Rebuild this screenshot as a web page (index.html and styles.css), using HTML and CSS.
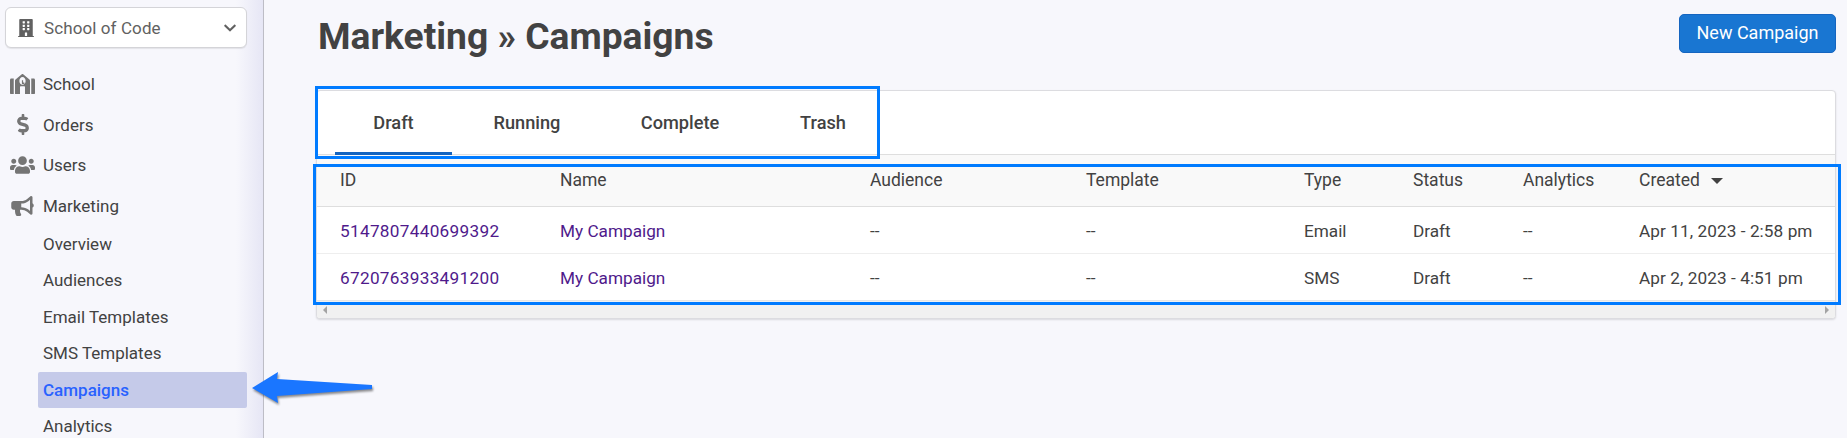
FILE: index.html
```html
<!DOCTYPE html>
<html lang="en">
<head>
<meta charset="utf-8">
<title>Marketing » Campaigns</title>
<link rel="stylesheet" href="styles.css">
</head>
<body>
<div class="app">
  <aside class="sidebar">
    <div class="school-select">
      <svg class="select-icon" viewBox="0 0 448 512"><path d="M436 480h-20V24c0-13.255-10.745-24-24-24H56C42.745 0 32 10.745 32 24v456H12c-6.627 0-12 5.373-12 12v20h448v-20c0-6.627-5.373-12-12-12zM128 76c0-6.627 5.373-12 12-12h40c6.627 0 12 5.373 12 12v40c0 6.627-5.373 12-12 12h-40c-6.627 0-12-5.373-12-12V76zm0 96c0-6.627 5.373-12 12-12h40c6.627 0 12 5.373 12 12v40c0 6.627-5.373 12-12 12h-40c-6.627 0-12-5.373-12-12v-40zm52 148h-40c-6.627 0-12-5.373-12-12v-40c0-6.627 5.373-12 12-12h40c6.627 0 12 5.373 12 12v40c0 6.627-5.373 12-12 12zm76 160h-64v-84c0-6.627 5.373-12 12-12h40c6.627 0 12 5.373 12 12v84zm64-172c0 6.627-5.373 12-12 12h-40c-6.627 0-12-5.373-12-12v-40c0-6.627 5.373-12 12-12h40c6.627 0 12 5.373 12 12v40zm0-96c0 6.627-5.373 12-12 12h-40c-6.627 0-12-5.373-12-12v-40c0-6.627 5.373-12 12-12h40c6.627 0 12 5.373 12 12v40zm0-96c0 6.627-5.373 12-12 12h-40c-6.627 0-12-5.373-12-12V76c0-6.627 5.373-12 12-12h40c6.627 0 12 5.373 12 12v40z"/></svg>
      <span class="select-label">School of Code</span>
      <svg class="select-chevron" viewBox="0 0 448 512"><path d="M207.029 381.476L12.686 187.132c-9.373-9.373-9.373-24.569 0-33.941l22.667-22.667c9.357-9.357 24.522-9.375 33.901-.04L224 284.505l154.745-154.021c9.379-9.335 24.544-9.317 33.901.04l22.667 22.667c9.373 9.373 9.373 24.569 0 33.941L240.971 381.476c-9.373 9.372-24.569 9.372-33.942 0z"/></svg>
    </div>
    <nav class="nav">
      <div class="nav-item">
        <span class="nav-icon"><svg class="icon-school" viewBox="0 96 640 416" preserveAspectRatio="none"><path d="M0 224v272c0 8.84 7.16 16 16 16h80V192H32c-17.67 0-32 14.33-32 32zm360 48h-24v-40c0-4.42-3.58-8-8-8h-16c-4.42 0-8 3.58-8 8v64c0 4.42 3.58 8 8 8h48c4.42 0 8-3.58 8-8v-16c0-4.42-3.58-8-8-8zm137.75-63.96l-160-106.67a32.02 32.02 0 0 0-35.5 0l-160 106.67A32.002 32.002 0 0 0 128 234.66V512h128V368c0-8.84 7.16-16 16-16h96c8.84 0 16 7.16 16 16v144h128V234.67c0-10.7-5.35-20.69-14.25-26.63zM320 320c-44.18 0-80-35.82-80-80s35.82-80 80-80 80 35.82 80 80-35.82 80-80 80zm288-128h-64v320h80c8.84 0 16-7.16 16-16V224c0-17.67-14.33-32-32-32z"/></svg></span>
        School
      </div>
      <div class="nav-item">
        <span class="nav-icon"><svg class="icon-dollar" viewBox="0 0 288 512"><path d="M209.2 233.4l-108-31.6C88.7 198.2 80 186.5 80 173.5c0-16.3 13.2-29.5 29.5-29.5h66.3c12.2 0 24.2 3.7 34.2 10.5 6.1 4.1 14.3 3.1 19.5-2l34.8-34c7.1-6.9 6.1-18.4-1.8-24.5C238 74.8 207.4 64.1 176 64V16c0-8.8-7.2-16-16-16h-32c-8.8 0-16 7.2-16 16v48h-2.5C45.8 64-5.4 118.7.5 183.6c4.2 46.1 39.4 83.6 83.8 96.6l102.5 30c12.5 3.7 21.2 15.3 21.2 28.3 0 16.3-13.2 29.5-29.5 29.5h-66.3C100 368 88 364.3 78 357.5c-6.1-4.1-14.3-3.1-19.5 2l-34.8 34c-7.1 6.9-6.1 18.4 1.8 24.5 24.5 19.2 55.1 29.9 86.5 30v48c0 8.8 7.2 16 16 16h32c8.8 0 16-7.2 16-16v-48.2c46.6-.9 90.3-28.6 105.7-72.7 21.5-61.6-14.6-124.8-72.5-141.7z"/></svg></span>
        Orders
      </div>
      <div class="nav-item">
        <span class="nav-icon"><svg class="icon-users" viewBox="0 0 640 512"><path d="M96 224c35.3 0 64-28.7 64-64s-28.7-64-64-64-64 28.7-64 64 28.7 64 64 64zm448 0c35.3 0 64-28.7 64-64s-28.7-64-64-64-64 28.7-64 64 28.7 64 64 64zm32 32h-64c-17.6 0-33.5 7.1-45.1 18.6 40.3 22.1 68.9 62 75.1 109.4h66c17.7 0 32-14.3 32-32v-32c0-35.3-28.7-64-64-64zm-256 0c61.9 0 112-50.1 112-112S381.9 32 320 32 208 82.1 208 144s50.1 112 112 112zm76.8 32h-8.3c-20.8 10-43.9 16-68.5 16s-47.6-6-68.5-16h-8.3C179.6 288 128 339.6 128 403.2V432c0 26.5 21.5 48 48 48h288c26.5 0 48-21.5 48-48v-28.8c0-63.6-51.6-115.2-115.2-115.2zm-223.7-13.4C161.5 263.1 145.6 256 128 256H64c-35.3 0-64 28.7-64 64v32c0 17.7 14.3 32 32 32h65.9c6.3-47.4 34.9-87.3 75.2-109.4z"/></svg></span>
        Users
      </div>
      <div class="nav-item">
        <span class="nav-icon"><svg class="icon-bullhorn" viewBox="0 0 576 512"><path d="M576 240c0-23.63-12.95-44.04-32-55.12V32.01C544 23.26 537.02 0 512 0c-7.12 0-14.19 2.38-19.98 7.02l-85.03 68.03C364.28 109.19 310.66 128 256 128H64c-35.35 0-64 28.65-64 64v96c0 35.35 28.65 64 64 64h33.7c-1.39 10.48-2.18 21.14-2.18 32 0 39.77 9.26 77.35 25.56 110.94 5.19 10.69 16.52 17.06 28.4 17.06h74.28c26.05 0 41.69-29.84 25.9-50.56-16.4-21.52-26.15-48.36-26.15-77.44 0-11.11 1.62-21.79 4.41-32H256c54.66 0 108.28 18.81 150.98 52.95l85.03 68.03a32.023 32.023 0 0 0 19.98 7.02c24.92 0 32-22.78 32-32V295.13C563.05 284.04 576 263.63 576 240zm-96 141.42l-33.05-26.44C392.95 311.78 325.12 288 256 288v-96c69.12 0 136.95-23.78 190.95-66.98L480 98.58v282.84z"/></svg></span>
        Marketing
      </div>
      <div class="subnav">
        <div class="sub-item">Overview</div>
        <div class="sub-item">Audiences</div>
        <div class="sub-item">Email Templates</div>
        <div class="sub-item">SMS Templates</div>
        <div class="sub-item sub-active">Campaigns</div>
        <div class="sub-item">Analytics</div>
      </div>
    </nav>
  </aside>
  <main class="content">
    <header class="page-head">
      <h1 class="page-title">Marketing » Campaigns</h1>
      <button class="btn-primary" type="button">New Campaign</button>
    </header>
    <section class="card">
      <div class="tabs">
        <div class="tab tab-draft tab-active">Draft</div>
        <div class="tab tab-running">Running</div>
        <div class="tab tab-complete">Complete</div>
        <div class="tab tab-trash">Trash</div>
      </div>
      <table class="table">
        <colgroup>
          <col class="c-id"><col class="c-name"><col class="c-aud"><col class="c-tpl"><col class="c-type"><col class="c-status"><col class="c-an"><col>
        </colgroup>
        <thead>
          <tr>
            <th>ID</th><th>Name</th><th>Audience</th><th>Template</th><th>Type</th><th>Status</th><th>Analytics</th>
            <th>Created<span class="sort-caret"></span></th>
          </tr>
        </thead>
        <tbody>
          <tr>
            <td><a class="link link-id" href="#">5147807440699392</a></td><td><a class="link" href="#">My Campaign</a></td><td>--</td><td>--</td><td>Email</td><td>Draft</td><td>--</td><td class="date">Apr 11, 2023 - 2:58 pm</td>
          </tr>
          <tr>
            <td><a class="link link-id" href="#">6720763933491200</a></td><td><a class="link" href="#">My Campaign</a></td><td>--</td><td>--</td><td>SMS</td><td>Draft</td><td>--</td><td class="date">Apr 2, 2023 - 4:51 pm</td>
          </tr>
        </tbody>
      </table>
      <div class="hscroll"><span class="arrow-left"></span><span class="arrow-right"></span></div>
    </section>
  </main>
</div>
<div class="mark mark-tabs"></div>
<div class="mark mark-table"></div>
<svg class="mark-arrow" viewBox="0 0 124 34"><polygon points="0,17 26,1 25,8 120,14 120,18 25,25 26,32"/></svg>
</body>
</html>
```
FILE: styles.css
```css
* { box-sizing: border-box; }
html, body { margin: 0; height: 438px; overflow: hidden; }
body {
  background: #f7f7fc;
  color: #424242;
  font-family: Roboto, "Liberation Sans", sans-serif;
  font-size: 16px;
  position: relative;
}
.app { display: flex; height: 438px; }

/* Sidebar */
.sidebar {
  width: 264px;
  flex: none;
  border-right: 1px solid #bdbdc6;
  background: linear-gradient(to right, #f7f7fc 0, #f7f7fc 236px, #e6e6f5 263px);
  padding: 7px 16px 0 5px;
}
.school-select {
  display: flex;
  align-items: center;
  height: 41px;
  background: #fff;
  border: 1px solid #d4d4d8;
  border-radius: 6px;
  box-shadow: 0 1px 1px rgba(0,0,0,.08);
  padding: 0 10px 0 12px;
}
.select-icon { width: 16px; height: 18px; fill: #616161; margin-right: 10px; flex: none; }
.select-label { flex: 1; color: #616161; font-size: 17px; letter-spacing: .1px; }
.select-chevron { width: 12px; height: 14px; fill: #616161; flex: none; }

.nav { padding-top: 16px; }
.nav-item {
  display: flex;
  align-items: center;
  height: 40.5px;
  color: #424242;
  font-size: 17px;
}
.nav-icon {
  width: 38px;
  flex: none;
  display: flex;
  justify-content: center;
  padding-right: 3px;
}
.nav-icon svg { fill: #757575; display: block; }
.icon-school { width: 25px; height: 20px; }
.icon-dollar { width: 12px; height: 21px; }
.icon-users { width: 25px; height: 20px; }
.icon-bullhorn { width: 23px; height: 20px; }

.subnav { padding: 0 0 0 33px; }
.sub-item {
  height: 36.4px;
  line-height: 36px;
  padding-left: 5px;
  font-size: 17px;
  color: #424242;
  border-radius: 2px;
}
.sub-active { background: #c5cae9; color: #2962ff; font-weight: 500; }

/* Main */
.content { flex: 1; min-width: 0; padding: 14px 11px 0 52px; }
.page-head { display: flex; justify-content: space-between; align-items: flex-start; height: 76px; }
.page-title {
  margin: 0 0 0 2px;
  font-size: 37.2px;
  line-height: 44px;
  font-weight: 700;
  color: #424242;
}
.btn-primary {
  width: 157px;
  height: 39px;
  background: #1976d2;
  border: 1px solid #1565c0;
  border-radius: 5px;
  color: #fff;
  font: 400 18px Roboto, sans-serif;
  padding: 0 0 2px;
}

.card {
  background: #fff;
  border: 1px solid #dcdce0;
  border-radius: 4px;
  box-shadow: 0 1px 2px rgba(0,0,0,.12);
  overflow: hidden;
}
.tabs { display: flex; height: 64px; border-bottom: 1px solid #dedede; padding-left: 18px; }
.tab {
  height: 64px;
  line-height: 64px;
  text-align: center;
  font-size: 18.2px;
  font-weight: 500;
  color: #424242;
}
.tab-draft { width: 117px; }
.tab-running { width: 150px; }
.tab-complete { width: 156px; }
.tab-trash { width: 130px; }
.tab-active { border-bottom: 3px solid #1565c0; }

.table { width: 100%; border-collapse: collapse; table-layout: fixed; font-size: 17.2px; }
.c-id { width: 243px; }
.c-name { width: 310px; }
.c-aud { width: 216px; }
.c-tpl { width: 218px; }
.c-type { width: 109px; }
.c-status { width: 110px; }
.c-an { width: 116px; }
.table th {
  text-align: left;
  font-size: 17.5px;
  font-weight: 400;
  height: 51px;
  padding: 0;
  background: #f9f9f9;
  border-bottom: 1px solid #dedede;
}
.table td { height: 47px; padding: 2px 0 0; border-bottom: 1px solid #eeeeee; }
.table tr:last-child td { border-bottom: 0; }
.table th:first-child, .table td:first-child { padding-left: 23px; }
.link { color: #4f1a8b; text-decoration: none; }
.link-id { letter-spacing: .3px; }
.date { letter-spacing: .07px; }
.sort-caret {
  display: inline-block;
  margin-left: 11px;
  vertical-align: 2px;
  border-style: solid;
  border-width: 6px 6.5px 0 6.5px;
  border-color: #424242 transparent transparent transparent;
}
.hscroll {
  display: flex;
  justify-content: space-between;
  align-items: center;
  height: 18px;
  background: #f1f1f1;
  border-top: 1px solid #e6e6e6;
  padding: 0 6px;
}
.arrow-left, .arrow-right { width: 0; height: 0; border-style: solid; border-color: transparent; }
.arrow-left { border-width: 4px 4px 4px 0; border-right-color: #a3a3a3; }
.arrow-right { border-width: 4px 0 4px 4px; border-left-color: #a3a3a3; }

/* Annotations drawn over the page */
.mark { position: absolute; border: 3px solid #007bff; pointer-events: none; }
.mark-tabs { left: 315px; top: 86px; width: 565px; height: 73px; }
.mark-table { left: 313px; top: 164px; width: 1528px; height: 141px; }
.mark-arrow {
  position: absolute;
  left: 252px;
  top: 371px;
  width: 124px;
  height: 34px;
  fill: #1a76ff;
  filter: drop-shadow(1px 2px 1px rgba(0,0,0,.45));
  overflow: visible;
}
```
